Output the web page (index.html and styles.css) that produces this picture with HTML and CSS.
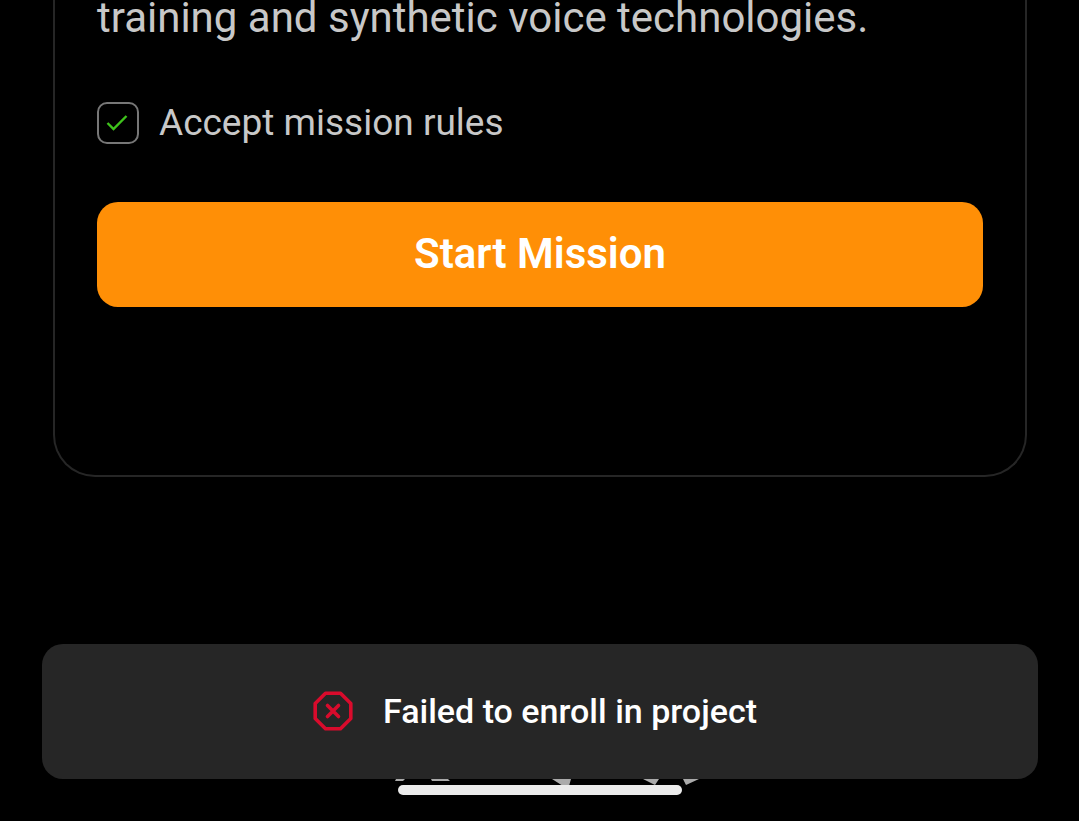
FILE: index.html
```html
<!DOCTYPE html>
<html lang="en">
<head>
<meta charset="utf-8">
<meta name="viewport" content="width=device-width, initial-scale=1">
<title>Mission</title>
<link rel="stylesheet" href="styles.css">
</head>
<body>
<main class="screen">
  <section class="card">
    <p class="description">training and synthetic voice technologies.</p>
    <label class="rules">
      <span class="checkbox">
        <input class="checkbox-input" type="checkbox" checked>
        <svg class="checkbox-mark" viewBox="0 0 42 42" aria-hidden="true"><path d="M10.500 21 16.500 27 29.500 14"/></svg>
      </span>
      <span>Accept mission rules</span>
    </label>
    <button class="start" type="button">Start Mission</button>
  </section>
</main>
<div class="toast" role="alert">
  <svg class="toast-icon" viewBox="0 0 40 40" aria-hidden="true">
    <path d="M12.500 2.200h15L37.800 12.500v15L27.500 37.800h-15L2.200 27.500v-15z"/>
    <path d="M14.500 14.500 25.500 25.500M25.500 14.500 14.500 25.500"/>
  </svg>
  <span>Failed to enroll in project</span>
</div>
<footer class="footer">
  <svg class="footer-mark" viewBox="0 0 308 8" aria-hidden="true">
    <path d="M1 0h9l-2 2H0zM36 0h17l2 2H37zM157 0h19l-2 7h-6zM248 0h16l-4 6zM288 0h16l-13 6z"/>
  </svg>
  <div class="home-indicator"></div>
</footer>
</body>
</html>
```
FILE: styles.css
```css
* {
  box-sizing: border-box;
}

body {
  margin: 0;
  min-height: 100vh;
  display: flex;
  flex-direction: column;
  justify-content: space-between;
  background: #000;
  color: #c8c8c8;
  font-family: Roboto, "Liberation Sans", sans-serif;
}

.screen {
  padding: 0 52px 0 53px;
}

.card {
  display: flex;
  flex-direction: column;
  padding: 0 42px 168px;
  border: 2px solid #262626;
  border-top: 0;
  border-radius: 0 0 42px 42px;
}

.description {
  margin: 0 0 58px;
  font-size: 42px;
  line-height: 36px;
}

.rules {
  display: flex;
  align-items: center;
  gap: 20px;
  margin: 8px 0 58px;
  font-size: 37px;
  line-height: 42px;
}

.checkbox {
  display: grid;
  width: 42px;
  height: 42px;
}

.checkbox-input,
.checkbox-mark {
  grid-area: 1 / 1;
  width: 100%;
  height: 100%;
  margin: 0;
}

.checkbox-input {
  appearance: none;
  border: 2px solid #777;
  border-radius: 10px;
}

.checkbox-mark {
  fill: none;
  stroke: #3fc31c;
  stroke-width: 2.4;
  pointer-events: none;
  visibility: hidden;
}

.checkbox-input:checked + .checkbox-mark {
  visibility: visible;
}

.start {
  height: 105px;
  padding: 0 20px 2px;
  border: 0;
  border-radius: 21px;
  background: #ff8f06;
  color: #fff;
  font: 600 42px/48px Roboto, "Liberation Sans", sans-serif;
}

.toast {
  position: fixed;
  right: 41px;
  bottom: 42px;
  left: 42px;
  z-index: 1;
  display: flex;
  align-items: center;
  justify-content: center;
  gap: 30px;
  min-height: 135px;
  padding: 20px 30px 22px 20px;
  border-radius: 21px;
  background: #262626;
  color: #fff;
  font-size: 34px;
  font-weight: 500;
  line-height: 42px;
}

.toast-icon {
  width: 40px;
  height: 40px;
  fill: none;
  stroke: #d90b2c;
  stroke-width: 3.6;
  stroke-linecap: round;
  stroke-linejoin: round;
}

.footer {
  display: grid;
  justify-items: center;
  padding-bottom: 26px;
}

.footer-mark,
.home-indicator {
  grid-area: 1 / 1;
}

.footer-mark {
  width: 308px;
  height: 8px;
  margin-left: 18px;
  fill: #aaa;
}

.home-indicator {
  width: 284px;
  height: 10px;
  margin-top: 6px;
  border-radius: 5px;
  background: #ebebeb;
}
```
